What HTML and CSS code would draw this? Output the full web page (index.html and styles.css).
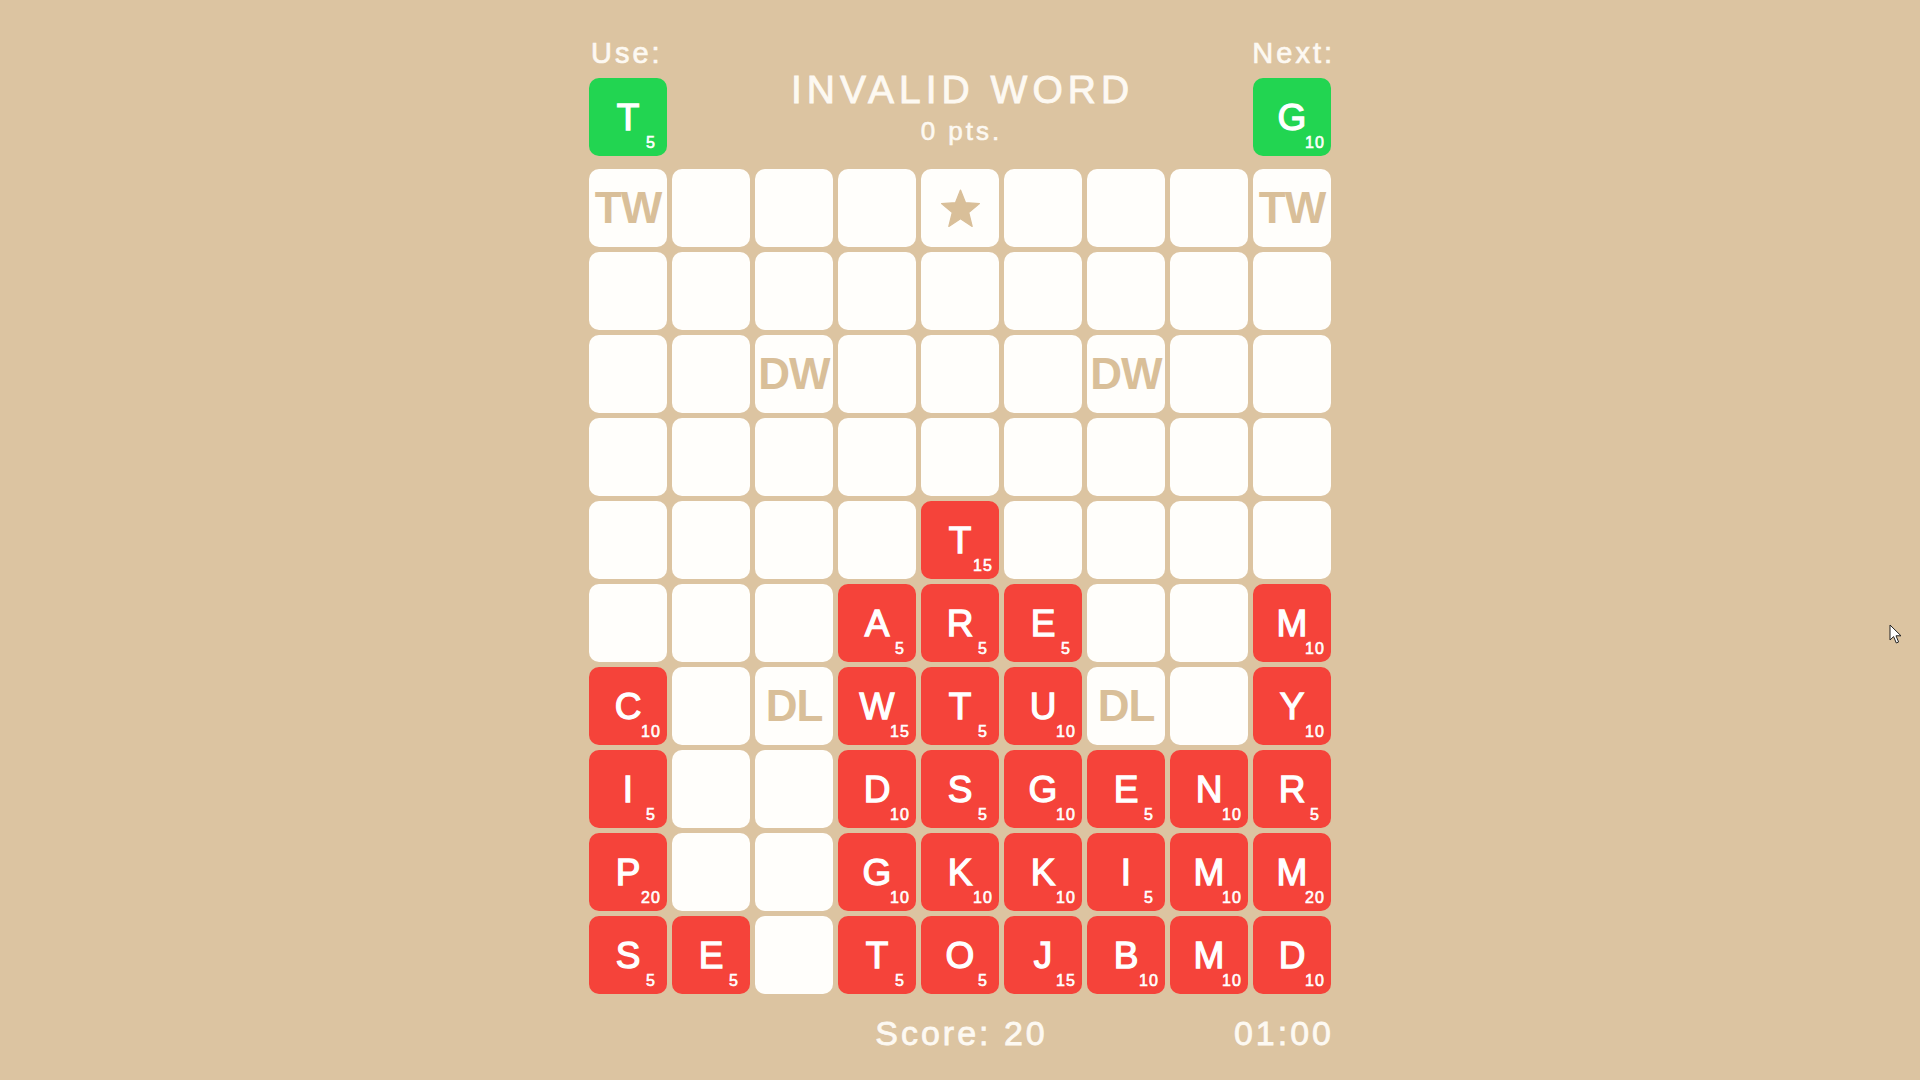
FILE: index.html
```html
<!DOCTYPE html>
<html lang="en">
<head>
<meta charset="utf-8">
<title>Word Tiles</title>
<link rel="stylesheet" href="styles.css">
</head>
<body>
<main class="game">
  <header class="header">
    <div class="side side-left">
      <div class="label">Use:</div>
      <div class="cell tile green"><span class="ltr">T</span><span class="pts">5</span></div>
    </div>
    <div class="center">
      <div class="title">INVALID WORD</div>
      <div class="subtitle">0 pts.</div>
    </div>
    <div class="side side-right">
      <div class="label label-right">Next:</div>
      <div class="cell tile green"><span class="ltr">G</span><span class="pts">10</span></div>
    </div>
  </header>

  <section class="board">
    <!-- row 0 -->
    <div class="cell bonus">TW</div>
    <div class="cell"></div>
    <div class="cell"></div>
    <div class="cell"></div>
    <div class="cell bonus"><svg class="star" viewBox="0 0 40 38" width="41" height="39"><path d="M20 1 L24.9 13.3 L38.5 14.2 L28 22.9 L31.4 36.5 L20 29 L8.6 36.5 L12 22.9 L1.5 14.2 L15.1 13.3 Z" fill="#d9bf99" stroke="#d9bf99" stroke-width="1.2" stroke-linejoin="round"/></svg></div>
    <div class="cell"></div>
    <div class="cell"></div>
    <div class="cell"></div>
    <div class="cell bonus">TW</div>
    <!-- row 1 -->
    <div class="cell"></div><div class="cell"></div><div class="cell"></div><div class="cell"></div><div class="cell"></div><div class="cell"></div><div class="cell"></div><div class="cell"></div><div class="cell"></div>
    <!-- row 2 -->
    <div class="cell"></div>
    <div class="cell"></div>
    <div class="cell bonus">DW</div>
    <div class="cell"></div>
    <div class="cell"></div>
    <div class="cell"></div>
    <div class="cell bonus">DW</div>
    <div class="cell"></div>
    <div class="cell"></div>
    <!-- row 3 -->
    <div class="cell"></div><div class="cell"></div><div class="cell"></div><div class="cell"></div><div class="cell"></div><div class="cell"></div><div class="cell"></div><div class="cell"></div><div class="cell"></div>
    <!-- row 4 -->
    <div class="cell"></div>
    <div class="cell"></div>
    <div class="cell"></div>
    <div class="cell"></div>
    <div class="cell tile"><span class="ltr">T</span><span class="pts">15</span></div>
    <div class="cell"></div>
    <div class="cell"></div>
    <div class="cell"></div>
    <div class="cell"></div>
    <!-- row 5 -->
    <div class="cell"></div>
    <div class="cell"></div>
    <div class="cell"></div>
    <div class="cell tile"><span class="ltr">A</span><span class="pts">5</span></div>
    <div class="cell tile"><span class="ltr">R</span><span class="pts">5</span></div>
    <div class="cell tile"><span class="ltr">E</span><span class="pts">5</span></div>
    <div class="cell"></div>
    <div class="cell"></div>
    <div class="cell tile"><span class="ltr">M</span><span class="pts">10</span></div>
    <!-- row 6 -->
    <div class="cell tile"><span class="ltr">C</span><span class="pts">10</span></div>
    <div class="cell"></div>
    <div class="cell bonus">DL</div>
    <div class="cell tile"><span class="ltr">W</span><span class="pts">15</span></div>
    <div class="cell tile"><span class="ltr">T</span><span class="pts">5</span></div>
    <div class="cell tile"><span class="ltr">U</span><span class="pts">10</span></div>
    <div class="cell bonus">DL</div>
    <div class="cell"></div>
    <div class="cell tile"><span class="ltr">Y</span><span class="pts">10</span></div>
    <!-- row 7 -->
    <div class="cell tile"><span class="ltr">I</span><span class="pts">5</span></div>
    <div class="cell"></div>
    <div class="cell"></div>
    <div class="cell tile"><span class="ltr">D</span><span class="pts">10</span></div>
    <div class="cell tile"><span class="ltr">S</span><span class="pts">5</span></div>
    <div class="cell tile"><span class="ltr">G</span><span class="pts">10</span></div>
    <div class="cell tile"><span class="ltr">E</span><span class="pts">5</span></div>
    <div class="cell tile"><span class="ltr">N</span><span class="pts">10</span></div>
    <div class="cell tile"><span class="ltr">R</span><span class="pts">5</span></div>
    <!-- row 8 -->
    <div class="cell tile"><span class="ltr">P</span><span class="pts">20</span></div>
    <div class="cell"></div>
    <div class="cell"></div>
    <div class="cell tile"><span class="ltr">G</span><span class="pts">10</span></div>
    <div class="cell tile"><span class="ltr">K</span><span class="pts">10</span></div>
    <div class="cell tile"><span class="ltr">K</span><span class="pts">10</span></div>
    <div class="cell tile"><span class="ltr">I</span><span class="pts">5</span></div>
    <div class="cell tile"><span class="ltr">M</span><span class="pts">10</span></div>
    <div class="cell tile"><span class="ltr">M</span><span class="pts">20</span></div>
    <!-- row 9 -->
    <div class="cell tile"><span class="ltr">S</span><span class="pts">5</span></div>
    <div class="cell tile"><span class="ltr">E</span><span class="pts">5</span></div>
    <div class="cell"></div>
    <div class="cell tile"><span class="ltr">T</span><span class="pts">5</span></div>
    <div class="cell tile"><span class="ltr">O</span><span class="pts">5</span></div>
    <div class="cell tile"><span class="ltr">J</span><span class="pts">15</span></div>
    <div class="cell tile"><span class="ltr">B</span><span class="pts">10</span></div>
    <div class="cell tile"><span class="ltr">M</span><span class="pts">10</span></div>
    <div class="cell tile"><span class="ltr">D</span><span class="pts">10</span></div>
  </section>

  <footer class="footer">
    <div></div>
    <div class="score">Score: 20</div>
    <div class="timer">01:00</div>
  </footer>
</main>
<svg class="cursor" viewBox="0 0 14 21" width="14" height="21"><path d="M1 1 L1 16 L4.6 12.6 L7.3 19 L9.6 18 L7 11.8 L12 11.8 Z" fill="#ffffff" stroke="#222222" stroke-width="1" stroke-linejoin="round"/></svg>
</body>
</html>
```

FILE: styles.css
```css
html, body {
  margin: 0;
  padding: 0;
}

body {
  background: #dcc4a1;
  width: 1920px;
  height: 1080px;
  overflow: hidden;
  position: relative;
  font-family: "Liberation Sans", Arial, sans-serif;
  color: #fdf9f2;
}

.game {
  width: 742px;
  margin: 36px auto 0;
}

.header {
  display: grid;
  grid-template-columns: 1fr auto 1fr;
  align-items: start;
}

.side {
  display: flex;
  flex-direction: column;
}

.side-left {
  align-items: flex-start;
}

.side-right {
  align-items: flex-end;
}

.label {
  font-size: 29px;
  line-height: 34px;
  height: 34px;
  letter-spacing: 3px;
  margin-bottom: 8px;
  padding-left: 2px;
  -webkit-text-stroke: 0.7px #fdf9f2;
}

.label-right {
  padding-left: 0;
  margin-right: -4px;
}

.center {
  text-align: center;
  padding-top: 32px;
}

.title {
  font-size: 39px;
  line-height: 44px;
  letter-spacing: 5px;
  padding-left: 5px;
  -webkit-text-stroke: 0.9px #fdf9f2;
}

.subtitle {
  font-size: 26px;
  line-height: 30px;
  letter-spacing: 3px;
  padding-left: 3px;
  margin-top: 4px;
  -webkit-text-stroke: 0.6px #fdf9f2;
}

.board {
  margin-top: 13px;
  display: grid;
  grid-template-columns: repeat(9, 78px);
  grid-auto-rows: 78px;
  gap: 5px;
}

.cell {
  width: 78px;
  height: 78px;
  box-sizing: border-box;
  background: #fffefb;
  border-radius: 10px;
  position: relative;
  display: flex;
  align-items: center;
  justify-content: center;
}

.bonus {
  color: #d9bf99;
  font-weight: bold;
  font-size: 44px;
  line-height: 1;
  letter-spacing: -1px;
}

.star {
  display: block;
}

.tile {
  background: #f5433a;
  color: #ffffff;
}

.tile.green {
  background: #22d551;
}

.ltr {
  font-size: 37px;
  line-height: 1;
  -webkit-text-stroke: 1.3px #ffffff;
}

.pts {
  position: absolute;
  right: 1px;
  bottom: 6px;
  width: 31px;
  text-align: center;
  font-size: 16px;
  line-height: 15px;
  letter-spacing: 1px;
  text-indent: 1px;
  -webkit-text-stroke: 0.6px #ffffff;
}

.footer {
  margin-top: 19px;
  display: grid;
  grid-template-columns: 1fr auto 1fr;
  font-size: 34px;
  line-height: 40px;
  letter-spacing: 3px;
  -webkit-text-stroke: 0.8px #fdf9f2;
}

.score {
  padding-left: 3px;
}

.timer {
  justify-self: end;
  margin-right: -3px;
}

.cursor {
  position: absolute;
  left: 1889px;
  top: 624px;
}
```
